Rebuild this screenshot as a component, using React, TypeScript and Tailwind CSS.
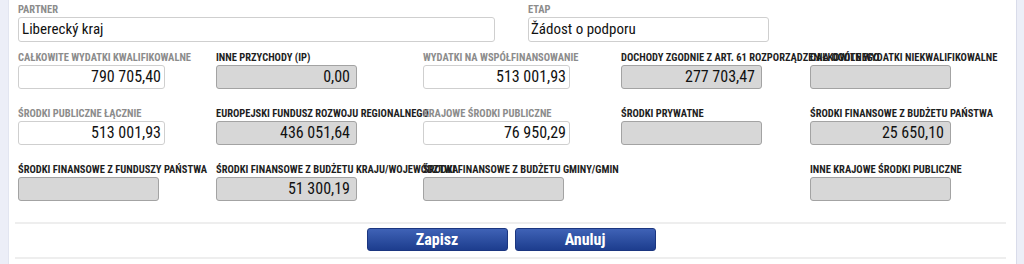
import React from 'react';

type Field = { label: string; value: string; white?: boolean } | null;

const rows: Field[][] = [
  [
    { label: 'CAŁKOWITE WYDATKI KWALIFIKOWALNE', value: '790 705,40', white: true },
    { label: 'INNE PRZYCHODY (IP)', value: '0,00' },
    { label: 'WYDATKI NA WSPÓŁFINANSOWANIE', value: '513 001,93', white: true },
    { label: 'DOCHODY ZGODNIE Z ART. 61 ROZPORZĄDZENIA OGÓLNEGO', value: '277 703,47' },
    { label: 'CAŁKOWITE WYDATKI NIEKWALIFIKOWALNE', value: '' },
  ],
  [
    { label: 'ŚRODKI PUBLICZNE ŁĄCZNIE', value: '513 001,93', white: true },
    { label: 'EUROPEJSKI FUNDUSZ ROZWOJU REGIONALNEGO', value: '436 051,64' },
    { label: 'KRAJOWE ŚRODKI PUBLICZNE', value: '76 950,29', white: true },
    { label: 'ŚRODKI PRYWATNE', value: '' },
    { label: 'ŚRODKI FINANSOWE Z BUDŻETU PAŃSTWA', value: '25 650,10' },
  ],
  [
    { label: 'ŚRODKI FINANSOWE Z FUNDUSZY PAŃSTWA', value: '' },
    { label: 'ŚRODKI FINANSOWE Z BUDŻETU KRAJU/WOJEWÓDZTWA', value: '51 300,19' },
    { label: 'ŚRODKI FINANSOWE Z BUDŻETU GMINY/GMIN', value: '' },
    null,
    { label: 'INNE KRAJOWE ŚRODKI PUBLICZNE', value: '' },
  ],
];

const font = "font-['Liberation_Sans_Narrow','Roboto_Condensed','DejaVu_Sans_Condensed','Liberation_Sans',sans-serif]";

const Label: React.FC<{ text: string; muted?: boolean }> = ({ text, muted }) => (
  <div
    className={`h-[12px] mb-[1px] text-[10.5px] leading-[12px] font-bold whitespace-nowrap overflow-visible ${
      muted ? 'text-[#8c8c8c]' : 'text-[#1e1e1e]'
    }`}
  >
    {text}
  </div>
);

const AmountField: React.FC<{ field: Field }> = ({ field }) => {
  if (!field) return <div />;
  return (
    <div className="min-w-0">
      <Label text={field.label} muted={field.white} />
      {field.white ? (
        <div className="w-[147px] h-[24px] bg-white border border-[#cfcfcf] rounded-[3px] text-right pr-[3px] text-[16px] leading-[22px] text-[#111]">
          {field.value}
        </div>
      ) : (
        <div className="w-[141px] h-[24px] bg-[#d7d7d7] border border-[#a3a3a3] rounded-[3px] text-right pr-[6px] text-[16px] leading-[22px] text-[#111]">
          {field.value}
        </div>
      )}
    </div>
  );
};

export default function App() {
  return (
    <div className={`w-[1024px] h-[264px] flex bg-white overflow-hidden ${font}`}>
      <div className="w-[9px] shrink-0 bg-[#eceef7] border-r border-[#e2e5f0]" />

      <div className="flex-1 pt-[4px]">
        <div className="flex pl-[9px]">
          <div className="w-[510px]">
            <Label text="PARTNER" muted />
            <div className="w-[477px] h-[25px] border border-[#cfcfcf] rounded-[3px] pl-[3px] text-[15px] leading-[23px] text-[#111]">
              Liberecký kraj
            </div>
          </div>
          <div>
            <Label text="ETAP" muted />
            <div className="w-[241px] h-[25px] border border-[#cfcfcf] rounded-[3px] pl-[2px] text-[15px] leading-[23px] text-[#111]">
              Žádost o podporu
            </div>
          </div>
        </div>

        <div className="mt-[10px] pl-[9px] grid grid-cols-[198px_207px_198px_189px_1fr] gap-y-[19px]">
          {rows.map((row, i) =>
            row.map((f, j) => <AmountField key={`${i}-${j}`} field={f} />)
          )}
        </div>

        <div className="mt-[21px] ml-[6px] mr-[10px] h-[2px] bg-[#eeeeee]" />
        <div className="mt-[4px] flex justify-center gap-[7px] pr-[3px]">
          <button className="w-[141px] h-[23px] rounded-[3px] border border-[#1b3680] bg-gradient-to-b from-[#3f62b6] to-[#1d3d8e] text-white text-[16px] leading-[21px] font-bold">
            Zapisz
          </button>
          <button className="w-[141px] h-[23px] rounded-[3px] border border-[#1b3680] bg-gradient-to-b from-[#3f62b6] to-[#1d3d8e] text-white text-[16px] leading-[21px] font-bold">
            Anuluj
          </button>
        </div>
        <div className="mt-[6px] ml-[6px] mr-[10px] h-[2px] bg-[#eeeeee]" />
      </div>

      <div className="w-[8px] shrink-0 bg-[#eceef7] border-l border-[#d9dcea]" />
    </div>
  );
}
